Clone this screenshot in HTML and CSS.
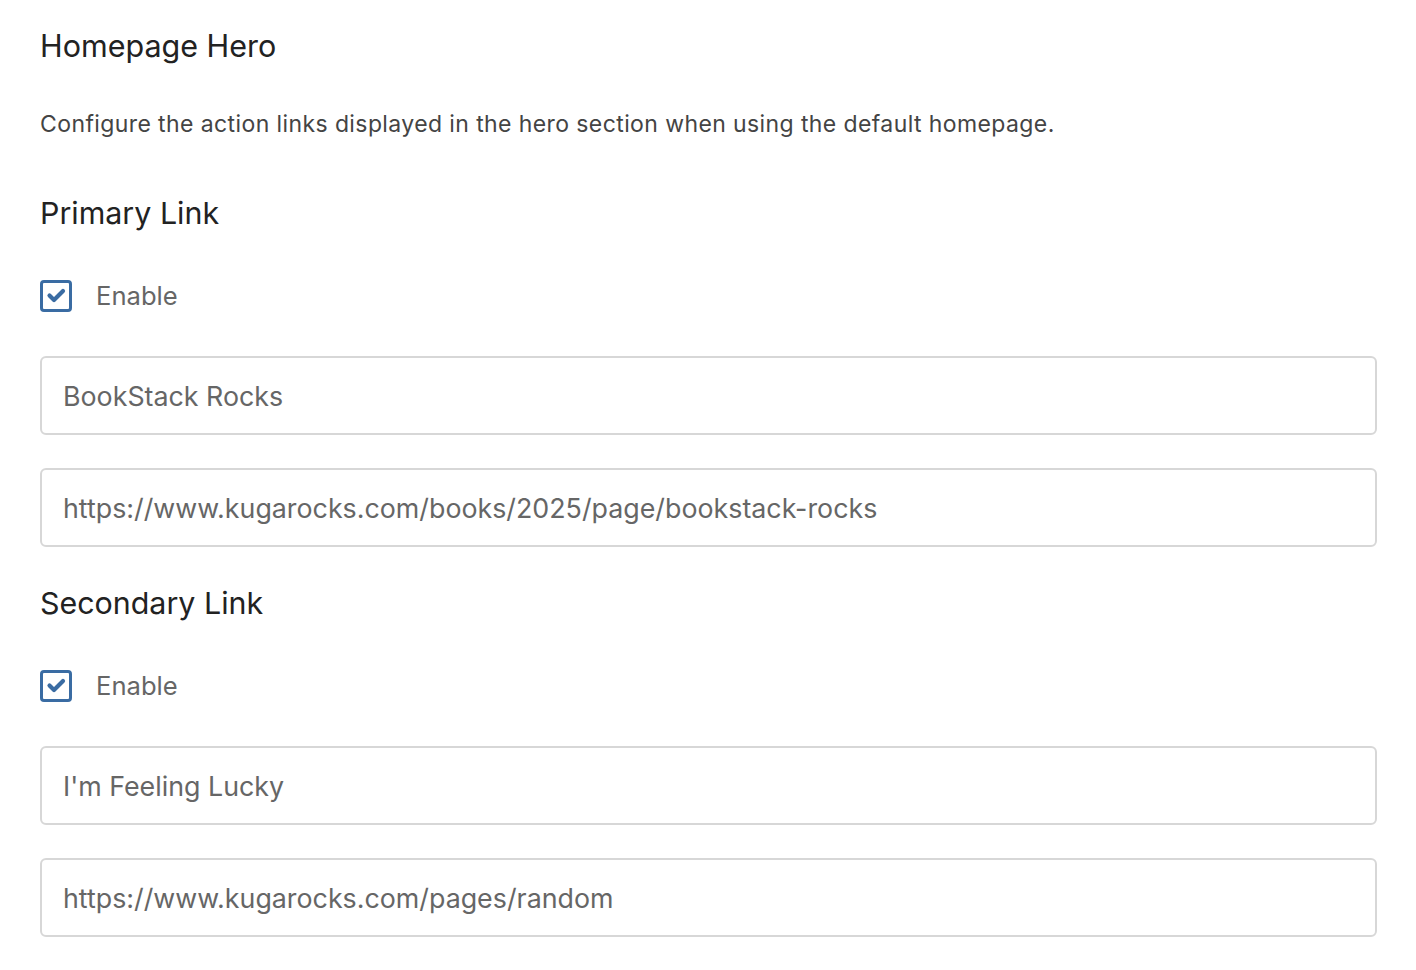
FILE: index.html
```html
<!DOCTYPE html>
<html>
<head>
<meta charset="utf-8">
<link rel="stylesheet" href="styles.css">
</head>
<body>
<div class="page">
  <h2 class="title">Homepage Hero</h2>
  <p class="desc">Configure the action links displayed in the hero section when using the default homepage.</p>

  <section class="group">
    <h3 class="subtitle">Primary Link</h3>
    <label class="check">
      <span class="box"><svg viewBox="0 0 25 25" width="25" height="25"><path d="M5.5 12.5 L10 17 L19 8" fill="none" stroke="#3a6ca3" stroke-width="4.2" stroke-linecap="round" stroke-linejoin="round"/></svg></span>
      <span class="check-label">Enable</span>
    </label>
    <div class="field">BookStack Rocks</div>
    <div class="field">https://www.kugarocks.com/books/2025/page/bookstack-rocks</div>
  </section>

  <section class="group">
    <h3 class="subtitle">Secondary Link</h3>
    <label class="check">
      <span class="box"><svg viewBox="0 0 25 25" width="25" height="25"><path d="M5.5 12.5 L10 17 L19 8" fill="none" stroke="#3a6ca3" stroke-width="4.2" stroke-linecap="round" stroke-linejoin="round"/></svg></span>
      <span class="check-label">Enable</span>
    </label>
    <div class="field">I'm Feeling Lucky</div>
    <div class="field">https://www.kugarocks.com/pages/random</div>
  </section>
</div>
</body>
</html>
```

FILE: styles.css
```css
html, body {
  margin: 0;
  padding: 0;
  background: #fff;
}
body {
  font-family: Inter, "Noto Sans", "Liberation Sans", sans-serif;
}
.page {
  padding: 26px 39px 0 40px;
}
.title {
  margin: 0;
  font-size: 30.5px;
  font-weight: 400;
  line-height: 40px;
  color: #222;
}
.desc {
  margin: 0;
  margin-top: 42px;
  font-size: 23px;
  letter-spacing: 0.4px;
  line-height: 32px;
  color: #444;
}
.subtitle {
  margin: 0;
  font-size: 30.4px;
  font-weight: 400;
  line-height: 40px;
  color: #222;
}
.group {
  margin-top: 53px;
}
.group + .group {
  margin-top: 36px;
}
.check {
  display: flex;
  align-items: center;
  gap: 24px;
  margin-top: 47px;
  height: 31px;
}
.box {
  box-sizing: border-box;
  width: 32px;
  height: 32px;
  border: 3.5px solid #3a6ca3;
  border-radius: 4px;
  display: flex;
  align-items: center;
  justify-content: center;
}
.check-label {
  font-size: 25.6px;
  color: #666;
}
.field {
  box-sizing: border-box;
  height: 79px;
  margin-top: 45px;
  border: 2px solid #d7d7d7;
  border-radius: 6px;
  padding: 0 21px;
  display: flex;
  align-items: center;
  font-size: 26.8px;
  color: #666;
}
.field + .field {
  margin-top: 33px;
}
```
